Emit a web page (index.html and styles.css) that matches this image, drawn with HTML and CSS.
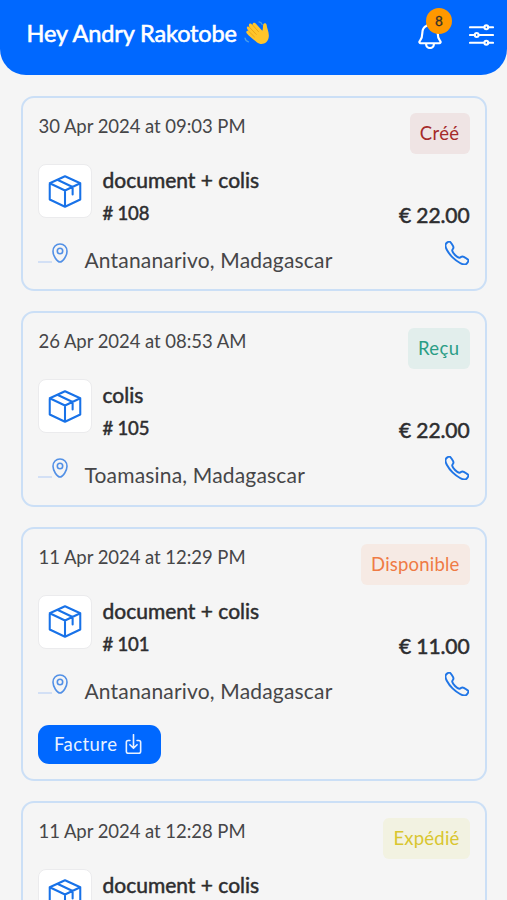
FILE: index.html
```html
<!DOCTYPE html>
<html lang="fr">
<head>
<meta charset="utf-8">
<title>Colis</title>
<link rel="stylesheet" href="styles.css">
</head>
<body>
<svg class="defs" aria-hidden="true">
  <symbol id="box" viewBox="0 0 32 32"><path d="M16 1.200 30.800 8v15.800L16 30.800 1.200 23.800V8zM1.200 8 16 15 30.800 8M16 15v15.800M8.600 4.600l14.800 7v7.200"/></symbol>
  <symbol id="pin" viewBox="0 0 16 20"><path d="M8 1C4 1 1 4 1 8.200C1 12.500 5 19 8 19S15 12.500 15 8.200C15 4 12 1 8 1z"/><circle cx="8" cy="8" r="2.700"/></symbol>
  <symbol id="phone" viewBox="40 40 432 432"><path d="M451 374c-15.880-16-54.340-39.350-73-48.760-24.300-12.240-26.300-13.240-45.400.950-12.740 9.470-21.210 17.930-36.120 14.750s-47.310-21.110-75.680-49.390-47.340-61.620-50.530-76.480 5.410-23.230 14.790-36c13.220-18 12.220-21 .920-45.300-8.810-18.900-32.840-57-48.900-72.800C119.900 44 119.900 47 108.830 51.600A160.150 160.150 0 0 0 83 65.370C67 76 58.120 84.830 51.910 98.100s-9 44.380 23.070 102.640 54.570 88.050 101.140 134.490S258.500 406.640 310.850 436c64.760 36.270 89.600 29.200 102.910 23s22.180-15 32.830-31a159.090 159.090 0 0 0 13.800-25.800C465 391.170 468 391.170 451 374z"/></symbol>
</svg>
<header class="header">
  <h1 class="hello">Hey Andry Rakotobe</h1>
  <svg class="wave" viewBox="0 0 26 26">
    <path class="skin" d="M2.600 13.800C1.500 12.300 3 10.600 4.500 11.800L3 9.500C2 7.500 4 6.300 5.300 8L4.800 6.500C4.200 4.300 6.500 3.600 7.600 5.200L8.300 5.800C8 3.600 10.300 3 11.500 4.600L17.600 11.200C18.600 9.500 18 7.500 18.500 5.500C19 3.300 21.600 3.600 21.800 5.800C22 9 24.500 13 23.800 17.500C23 23.300 17 26 12.300 22.300C9 19.600 4.500 16.500 2.600 13.800z"/>
    <path class="finger" d="M8.300 5.800l5.700 6.400M5.300 8l6.500 6.800M4.500 11.800l5.500 5.400"/>
    <path class="motion" d="M14.500 2.800c1.600.2 2.600 1.200 3 2.600M1 18.500c.3 1.800 1.500 3 3.300 3.500"/>
  </svg>
  <div class="bell">
    <svg class="bell-icon" viewBox="64 32 384 448"><path d="M427.680 351.430C402 320 383.870 304 383.870 217.350 383.870 138 343.350 109.730 310 96c-4.430-1.820-8.600-6-9.950-10.550C294.200 65.540 277.800 48 256 48s-38.210 17.550-44 37.470c-1.350 4.600-5.520 8.710-9.950 10.530-33.390 13.750-73.870 41.920-73.870 121.350C128.130 304 110 320 84.320 351.430 73.680 364.450 83 384 101.610 384h308.880c18.510 0 27.770-19.610 17.190-32.570zM320 384v16a64 64 0 0 1-128 0v-16"/></svg>
    <span class="count">8</span>
  </div>
  <svg class="options" viewBox="48 80 416 352"><path d="M368 128h80M64 128h240M368 384h80M64 384h240M208 256h240M64 256h80"/><circle cx="336" cy="128" r="32"/><circle cx="176" cy="256" r="32"/><circle cx="336" cy="384" r="32"/></svg>
</header>
<main class="list">
  <article class="card">
    <div class="top"><time class="date">30 Apr 2024 at 09:03 PM</time><span class="status created">Créé</span></div>
    <div class="item">
      <span class="thumb"><svg><use href="#box"/></svg></span>
      <div class="info"><h2 class="name">document + colis</h2><p class="num"># 108</p></div>
      <strong class="price">€ 22.00</strong>
    </div>
    <div class="place"><i class="dash"></i><svg class="pin"><use href="#pin"/></svg><span class="city">Antananarivo, Madagascar</span><svg class="phone"><use href="#phone"/></svg></div>
  </article>
  <article class="card">
    <div class="top"><time class="date">26 Apr 2024 at 08:53 AM</time><span class="status received">Reçu</span></div>
    <div class="item">
      <span class="thumb"><svg><use href="#box"/></svg></span>
      <div class="info"><h2 class="name">colis</h2><p class="num"># 105</p></div>
      <strong class="price">€ 22.00</strong>
    </div>
    <div class="place"><i class="dash"></i><svg class="pin"><use href="#pin"/></svg><span class="city">Toamasina, Madagascar</span><svg class="phone"><use href="#phone"/></svg></div>
  </article>
  <article class="card with-invoice">
    <div class="top"><time class="date">11 Apr 2024 at 12:29 PM</time><span class="status available">Disponible</span></div>
    <div class="item">
      <span class="thumb"><svg><use href="#box"/></svg></span>
      <div class="info"><h2 class="name">document + colis</h2><p class="num"># 101</p></div>
      <strong class="price">€ 11.00</strong>
    </div>
    <div class="place"><i class="dash"></i><svg class="pin"><use href="#pin"/></svg><span class="city">Antananarivo, Madagascar</span><svg class="phone"><use href="#phone"/></svg></div>
    <button class="invoice">Facture<svg viewBox="80 32 352 448"><path d="M336 176h40a40 40 0 0 1 40 40v208a40 40 0 0 1-40 40H136a40 40 0 0 1-40-40V216a40 40 0 0 1 40-40h40M176 272l80 80 80-80M256 48v288"/></svg></button>
  </article>
  <article class="card cut">
    <div class="top"><time class="date">11 Apr 2024 at 12:28 PM</time><span class="status sent">Expédié</span></div>
    <div class="item">
      <span class="thumb"><svg><use href="#box"/></svg></span>
      <div class="info"><h2 class="name">document + colis</h2></div>
    </div>
  </article>
</main>
</body>
</html>
```
FILE: styles.css
```css
* { box-sizing: border-box; margin: 0; padding: 0; }
html, body { height: 900px; overflow: hidden; }
body { background: #f5f5f5; font-family: Lato, sans-serif; color: #2d2d2f; display: flex; flex-direction: column; }
svg { fill: none; stroke: currentColor; stroke-linecap: round; stroke-linejoin: round; display: block; flex: none; }
.defs { display: none; }

.header { flex: none; height: 75px; background: #0068ff; border-radius: 0 0 26px 26px; color: #fff; display: flex; align-items: flex-start; padding: 0 13px 0 26.500px; }
.hello { font-size: 23.5px; line-height: 28px; letter-spacing: -.12px; font-weight: 400; -webkit-text-stroke: .6px; margin-top: 19px; white-space: nowrap; width: 210px; }
.wave { width: 27px; height: 27px; margin: 19px 0 0 7px; }
.wave .skin { fill: #ffc52b; stroke: none; }
.wave .finger { stroke: #e59a12; stroke-width: .7; }
.wave .motion { stroke: #4b9fe8; stroke-width: 1.2; }
.bell { position: relative; margin: 22px 0 0 auto; }
.bell-icon { width: 24px; height: 27px; stroke-width: 36; }
.count { position: absolute; left: 8px; top: -14px; width: 26px; height: 26px; border-radius: 50%; background: #ff9800; color: #33302b; font-size: 13.5px; line-height: 27px; text-align: center; -webkit-text-stroke: .3px; }
.options { width: 25px; height: 22px; margin: 24px 0 0 27px; stroke-width: 34; }

.list { flex: 1; min-height: 0; display: flex; flex-direction: column; gap: 20px; padding: 21px 20.500px 0 21px; }
.card { border: 2px solid #cbdff6; border-radius: 13px; height: 195.300px; padding: 0 15px; flex: none; }
.with-invoice { height: 254.200px; }
.cut { flex: 1; min-height: 0; height: auto; border-bottom: 0; border-radius: 13px 13px 0 0; overflow: hidden; }
.top { height: 66px; display: flex; justify-content: space-between; align-items: flex-start; }
.date { font-size: 18.500px; line-height: 24px; letter-spacing: -.05px; margin: 16px 0 0 .5px; color: #464648; white-space: nowrap; }
.status { margin-top: 15px; height: 41px; line-height: 41px; padding: 0 10px; font-size: 18.500px; letter-spacing: .2px; border-radius: 6px; white-space: nowrap; }
.created { background: #efe4e4; color: #a52a2a; letter-spacing: .4px; }
.received { background: #e2eeec; color: #2a9d85; letter-spacing: .4px; }
.available { background: #f6eae4; color: #ef7b45; }
.sent { background: #f2f2e1; color: #d9c62f; }
.item { height: 56px; display: flex; }
.thumb { width: 54px; height: 54px; border: 1px solid #ebebed; border-radius: 8px; background: #fff; display: grid; place-items: center; color: #1872e8; flex: none; }
.thumb svg { width: 34px; height: 33px; stroke-width: 2; }
.info { margin-left: 10.500px; flex: 1; -webkit-text-stroke: .5px; }
.name { font-size: 21px; line-height: 26px; font-weight: 400; margin-top: 3px; white-space: nowrap; }
.num { font-size: 18.500px; line-height: 24px; letter-spacing: -.2px; margin-top: 8px; }
.price { font-size: 21px; line-height: 26px; letter-spacing: -.1px; font-weight: 400; -webkit-text-stroke: .5px; margin-top: 38px; white-space: nowrap; }
.place { height: 52px; display: flex; align-items: flex-start; color: #1f75e6; }
.dash { width: 13.500px; height: 2px; background: #d3e0f5; margin-top: 41px; }
.pin { width: 16px; height: 20px; margin-top: 23px; stroke-width: 1.600; color: #5290e6; }
.city { font-size: 21px; line-height: 26px; letter-spacing: .18px; margin: 27px 0 0 17px; color: #464648; white-space: nowrap; }
.phone { width: 24px; height: 24px; margin: 21px 1px 0 auto; stroke-width: 35; }
.invoice { display: flex; align-items: center; width: 123px; height: 39px; border: 0; border-radius: 11px; background: #0068ff; color: #e8f1ff; font: 18.500px Lato, sans-serif; letter-spacing: .45px; padding: 0 16px; margin-top: 22px; gap: 7px; }
.invoice svg { width: 19px; height: 20px; stroke-width: 36; }
```
